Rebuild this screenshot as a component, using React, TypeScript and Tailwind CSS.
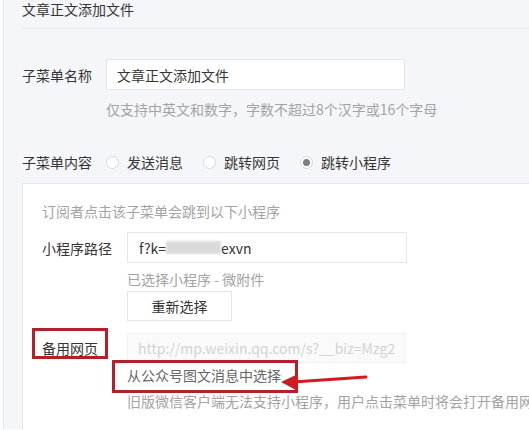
import React from "react";

const font = { fontFamily: '"Noto Sans CJK SC", "Liberation Sans", sans-serif' };

function Radio({ checked, label }: { checked?: boolean; label: string }) {
  return (
    <div className="flex items-center">
      <span className="flex h-[13px] w-[13px] items-center justify-center rounded-full border border-[#d6d8dc] bg-white">
        {checked && <span className="h-[7px] w-[7px] rounded-full bg-[#7d7d7d]" />}
      </span>
      <span className="ml-[8px] text-[#353535]">{label}</span>
    </div>
  );
}

export default function App() {
  return (
    <div
      className="relative h-[430px] w-[529px] overflow-hidden bg-[#fafbfc] text-[14px] leading-[20px]"
      style={font}
    >
      <div className="ml-[3px] h-full border-l border-[#e6e8ec] bg-[#f5f6f9] pl-[18px]">
        <div className="mt-[-1px] border-b border-[#e4e6ea] pb-[9px] text-[#353535]">文章正文添加文件</div>

        <div className="mt-[30px] flex items-center">
          <div className="w-[84px] text-[#353535]">子菜单名称</div>
          <div className="flex h-[31px] w-[299px] items-center border border-[#e4e6eb] bg-white px-[10px] text-[#353535]">
            文章正文添加文件
          </div>
        </div>
        <div className="ml-[84px] mt-[9px] text-[#a3a3a3]">仅支持中英文和数字，字数不超过8个汉字或16个字母</div>

        <div className="mt-[33px] flex items-center">
          <div className="w-[84px] text-[#353535]">子菜单内容</div>
          <div className="flex items-center gap-[20px]">
            <Radio label="发送消息" />
            <Radio label="跳转网页" />
            <Radio checked label="跳转小程序" />
          </div>
        </div>

        <div className="mt-[11px] h-[400px] border-l border-t border-[#e7e8ec] bg-white pl-[19px] pt-[17px]">
          <div className="text-[#a3a3a3]">订阅者点击该子菜单会跳到以下小程序</div>

          <div className="mt-[11px] flex items-center">
            <div className="w-[85px] text-[#353535]">小程序路径</div>
            <div className="flex h-[31px] w-[280px] items-center border border-[#e4e6eb] bg-white px-[11px] text-[#353535]">
              <span>f?k=</span>
              <span className="inline-block h-[13px] w-[55px] bg-[#dadada] blur-[1px]" />
              <span>exvn</span>
            </div>
          </div>
          <div className="ml-[85px] mt-[6px] text-[#a3a3a3]">已选择小程序 - 微附件</div>
          <div className="ml-[85px] mt-[2px] flex h-[30px] w-[105px] items-center justify-center border border-[#e2e4e8] bg-white text-[#353535]">
            重新选择
          </div>

          <div className="mt-[12px] flex items-center">
            <div className="w-[85px]">
              <span className="relative inline-block text-[#353535]">
                备用网页
                <span className="absolute bottom-[-1px] left-[-10px] right-[-10px] top-[-10px] border-[3px] border-[#b4202a]" />
              </span>
            </div>
            <div className="flex h-[30px] w-[279px] items-center overflow-hidden whitespace-nowrap border border-[#f1f2f4] bg-[#fafafb] px-[10px] text-[#d3d3d3]">
              http://mp.weixin.qq.com/s?__biz=Mzg2
            </div>
          </div>
          <div className="ml-[85px] mt-[2px]">
            <span className="relative inline-block text-[#666666]">
              从公众号图文消息中选择
              <span className="absolute bottom-[-8px] left-[-15px] right-[-17px] top-[-5px] border-[3px] border-[#b4202a]" />
            </span>
          </div>
          <div className="ml-[85px] mt-[6px] whitespace-nowrap text-[#a3a3a3]">
            旧版微信客户端无法支持小程序，用户点击菜单时将会打开备用网页
          </div>
        </div>
      </div>

      <svg className="pointer-events-none absolute left-0 top-0" width="529" height="430" viewBox="0 0 529 430">
        <line x1="366" y1="377" x2="293" y2="382" stroke="#cf1b22" strokeWidth="3" strokeLinecap="round" />
        <polygon points="281,382 298,374 298,391" fill="#cf1b22" />
      </svg>
    </div>
  );
}
